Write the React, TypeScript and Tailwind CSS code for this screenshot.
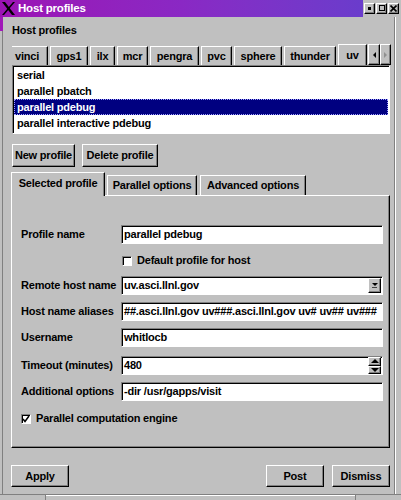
import React from "react";

const raised =
	"border border-t-white border-l-white border-r-black border-b-black shadow-[inset_-1px_-1px_0_#808080]";
const sunken =
	"border border-t-[#808080] border-l-[#808080] border-r-white border-b-white shadow-[inset_1px_1px_0_#000]";

const hostTabs: {name: string; w: string}[] = [
	{name: "vinci", w: "w-[36px]"},
	{name: "gps1", w: "w-[38px]"},
	{name: "ilx", w: "w-[25px]"},
	{name: "mcr", w: "w-[31px]"},
	{name: "pengra", w: "w-[49px]"},
	{name: "pvc", w: "w-[31px]"},
	{name: "sphere", w: "w-[48px]"},
	{name: "thunder", w: "w-[52px]"},
];

const profiles = [
	"serial",
	"parallel pbatch",
	"parallel pdebug",
	"parallel interactive pdebug",
];

const XLogo = () => (
	<svg width="13" height="13" viewBox="0 0 13 13" className="shrink-0">
		<polygon points="0,0 3,0 13,13 10,13" fill="#000" />
		<polygon points="11,0 13,0 2,13 0,13" fill="#000" />
	</svg>
);

const WinButton = ({kind}: {kind: "min" | "max" | "close"}) => (
	<div className={`w-[11px] h-[11px] flex items-center justify-center bg-[#c0c0c0] ${raised}`}>
		{kind === "min" && <div className="w-[3px] h-[3px] bg-black" />}
		{kind === "max" && <div className="w-[6px] h-[6px] border-[1.5px] border-black" />}
		{kind === "close" && (
			<svg width="7" height="7" viewBox="0 0 7 7">
				<path d="M0.5 0.5 L6.5 6.5 M6.5 0.5 L0.5 6.5" stroke="#000" strokeWidth="1.6" />
			</svg>
		)}
	</div>
);

const Field = ({label, children, className = ""}: {label: string; children: React.ReactNode; className?: string}) => (
	<div className={`flex items-center h-[19px] ${className}`}>
		<div className="w-[100px] shrink-0 text-black whitespace-nowrap">{label}</div>
		{children}
	</div>
);

const TextBox = ({value, children}: {value: string; children?: React.ReactNode}) => (
	<div className={`w-[262px] h-[19px] bg-white flex items-center whitespace-nowrap pl-[2px] ${sunken}`}>
		<span className="flex-1">{value}</span>
		{children}
	</div>
);

const CheckBox = ({checked, label}: {checked: boolean; label: string}) => (
	<div className="flex items-center gap-[5px]">
		<div className={`w-[10px] h-[10px] bg-white flex items-center justify-center ${sunken}`}>
			{checked && (
				<svg width="8" height="8" viewBox="0 0 8 8">
					<path d="M1 4 L3 6.5 L7 1" stroke="#000" strokeWidth="1.5" fill="none" />
				</svg>
			)}
		</div>
		<span>{label}</span>
	</div>
);

const tabEdge =
	"border-t border-l border-t-white border-l-white border-r border-r-black shadow-[inset_-1px_0_0_#808080]";

export default function App() {
	return (
		<div className="w-[401px] h-[500px] flex flex-col bg-[#c0c0c0] overflow-hidden font-['Liberation_Sans',Arial,sans-serif] text-[11px] font-bold tracking-[-0.2px] text-black">
			{/* title bar */}
			<div className="h-[17px] flex shrink-0">
				<div className="flex-1 flex items-center gap-[3px] pl-[2px] bg-linear-to-r from-[#9c12b4] via-[#8a28c4] to-[#6a3ccc]">
					<XLogo />
					<span className="text-white text-[11.5px]">Host profiles</span>
				</div>
				<div className="w-[38px] flex items-center gap-[1px] pl-[1px] pb-[1px]">
					<WinButton kind="min" />
					<WinButton kind="max" />
					<WinButton kind="close" />
				</div>
			</div>

			<div className="flex-1 flex min-h-0">
				<div className="w-[3px] flex flex-col">
					<div className="h-[14px] bg-[#a018b8]" />
					<div className="flex-1 border-r border-[#808080]" />
				</div>

				<div className="w-[392px] flex flex-col pl-[8px] pr-[4px] border-r border-[#808080]">
					<div className="mt-[6px] h-[14px] leading-[14px] pl-[1px]">Host profiles</div>

					{/* host tabs */}
					<div className="mt-[7px] h-[21px] ml-[1px] flex items-end">
						<div className="flex items-end gap-[2px]">
							{hostTabs.map((t, i) => (
								<div
									key={t.name}
									className={`${t.w} h-[19px] flex items-center ${
										i === 0
											? "pl-[3px] border-t border-t-white border-r border-r-black shadow-[inset_-1px_0_0_#808080]"
											: `justify-center ${tabEdge}`
									}`}
								>
									{t.name}
								</div>
							))}
							<div className={`w-[29px] h-[21px] flex items-center justify-center ${tabEdge}`}>uv</div>
						</div>
						<div className="ml-[1px] flex h-[21px]">
							<div className={`w-[12px] flex items-center justify-center ${raised}`}>
								<div className="w-0 h-0 border-y-[3px] border-y-transparent border-r-[3px] border-r-black" />
							</div>
							<div className={`w-[11px] flex items-center justify-center ${raised}`}>
								<div className="w-0 h-0 border-y-[3px] border-y-transparent border-l-[3px] border-l-[#909090]" />
							</div>
						</div>
					</div>

					{/* profile list */}
					<div className={`ml-[1px] w-[378px] h-[69px] bg-white ${sunken} pt-[1px] px-[1px]`}>
						{profiles.map((p) => (
							<div
								key={p}
								className={`h-[16px] leading-[16px] pl-[3px] ${
									p === "parallel pdebug"
										? "bg-[#000080] text-white outline outline-1 outline-dotted outline-[#a0a0ff] -outline-offset-1"
										: ""
								}`}
							>
								{p}
							</div>
						))}
					</div>

					<div className="mt-[10px] ml-[1px] h-[23px] flex gap-[7px]">
						<div className={`w-[63px] flex items-center justify-center ${raised}`}>New profile</div>
						<div className={`w-[76px] flex items-center justify-center ${raised}`}>Delete profile</div>
					</div>

					{/* option tabs */}
					<div className="mt-[5px] h-[23px] flex items-end">
						<div className={`relative z-10 -mb-[1px] w-[94px] h-[24px] bg-[#c0c0c0] flex items-center justify-center pb-[3px] ${tabEdge}`}>
							Selected profile
						</div>
						<div className={`ml-[2px] w-[90px] h-[20px] flex items-center justify-center ${tabEdge}`}>
							Parallel options
						</div>
						<div className={`ml-[3px] w-[106px] h-[20px] flex items-center justify-center ${tabEdge}`}>
							Advanced options
						</div>
					</div>

					{/* panel */}
					<div className={`h-[253px] flex flex-col pt-[29px] pl-[9px] ${raised}`}>
						<Field label="Profile name">
							<TextBox value="parallel pdebug" />
						</Field>
						<div className="mt-[7px] h-[19px] flex items-center pl-[101px]">
							<CheckBox checked={false} label="Default profile for host" />
						</div>
						<Field label="Remote host name" className="mt-[6px]">
							<TextBox value="uv.asci.llnl.gov">
								<div className={`w-[13px] h-[15px] mr-[1px] bg-[#c0c0c0] flex flex-col items-center justify-center gap-[1px] ${raised}`}>
									<div className="w-0 h-0 border-x-[3px] border-x-transparent border-t-[3px] border-t-black" />
									<div className="w-[5px] h-[1px] bg-[#404040]" />
								</div>
							</TextBox>
						</Field>
						<Field label="Host name aliases" className="mt-[7px]">
							<TextBox value="##.asci.llnl.gov uv###.asci.llnl.gov uv# uv## uv###" />
						</Field>
						<Field label="Username" className="mt-[7px]">
							<TextBox value="whitlocb" />
						</Field>
						<Field label="Timeout (minutes)" className="mt-[9px]">
							<TextBox value="480">
								<div className="w-[13px] h-[17px] mr-[1px] flex flex-col">
									<div className={`flex-1 bg-[#c0c0c0] flex items-center justify-center ${raised}`}>
										<div className="w-0 h-0 border-x-[4px] border-x-transparent border-b-[4px] border-b-black" />
									</div>
									<div className={`flex-1 bg-[#c0c0c0] flex items-center justify-center ${raised}`}>
										<div className="w-0 h-0 border-x-[4px] border-x-transparent border-t-[4px] border-t-black" />
									</div>
								</div>
							</TextBox>
						</Field>
						<Field label="Additional options" className="mt-[7px]">
							<TextBox value="-dir /usr/gapps/visit" />
						</Field>
						<div className="mt-[8px] h-[19px] flex items-center">
							<CheckBox checked label="Parallel computation engine" />
						</div>
					</div>

					<div className="mt-[17px] h-[22px] flex">
						<div className={`w-[58px] flex items-center justify-center ${raised}`}>Apply</div>
						<div className="flex-1" />
						<div className={`w-[58px] flex items-center justify-center ${raised}`}>Post</div>
						<div className={`ml-[8px] w-[58px] flex items-center justify-center ${raised}`}>Dismiss</div>
					</div>
				</div>

				<div className="w-[6px] border-l border-white" />
			</div>

			<div className="h-[6px] shrink-0 border-t border-[#808080] flex">
				<div className="w-[46px] border-r border-[#808080]" />
				<div className="flex-1 border-t border-white" />
				<div className="w-[46px] border-l border-[#808080]" />
			</div>
		</div>
	);
}
